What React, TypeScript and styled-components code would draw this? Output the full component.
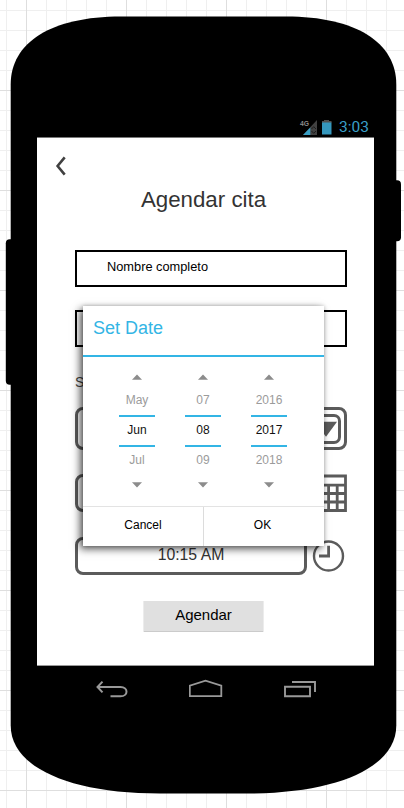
import React from "react";
import styled, { createGlobalStyle } from "styled-components";

const GlobalStyle = createGlobalStyle`
  * { box-sizing: border-box; }
  body {
    margin: 0;
    font-family: "Liberation Sans", Arial, sans-serif;
    background: #fff;
    overflow: hidden;
  }
`;

const Canvas = styled.main`
  position: relative;
  width: 404px;
  height: 808px;
  overflow: hidden;
  background-color: #fff;
  background-image:
    linear-gradient(90deg, #dedede 1px, transparent 1px),
    linear-gradient(#dedede 1px, transparent 1px),
    linear-gradient(90deg, #efefef 1px, transparent 1px),
    linear-gradient(#efefef 1px, transparent 1px);
  background-size: 100px 100px, 100px 100px, 20px 20px, 20px 20px;
  background-position: 26px 0, 0 90px, 6px 0, 0 10px;
`;

const Silhouette = styled.svg`
  position: absolute;
  inset: 0;
`;

const Device = styled.div`
  position: relative;
  display: flex;
  flex-direction: column;
  width: 337px;
  margin-left: 37px;
  padding-top: 116px;
`;

const StatusBar = styled.header`
  display: flex;
  justify-content: flex-end;
  align-items: center;
  height: 22px;
  padding-right: 5px;
  border-bottom: 1px solid #777;
  color: #3a9fc8;
  line-height: 21px;
`;

const Clock = styled.span`
  padding-top: 1px;
  font-family: Roboto, sans-serif;
  font-size: 15.5px;
`;

const StatusIcons = styled.svg`
  margin-right: 6px;
`;

const Screen = styled.section`
  position: relative;
  display: flex;
  flex-direction: column;
  height: 527px;
  padding: 0 27px 0 38px;
  background: #fff;
`;

const BackButton = styled.button`
  display: flex;
  margin: 17px 0 0 -21px;
  padding: 0;
  width: 14px;
  height: 22px;
  border: 0;
  background: none;
`;

const Title = styled.h1`
  margin: 8px 0 0 -5px;
  height: 29px;
  font-size: 22.3px;
  line-height: 29px;
  font-weight: 400;
  text-align: center;
  color: #333;
  width: 267px;
`;

const Field = styled.div<{ $top: number }>`
  height: 37px;
  margin-top: ${(p) => p.$top}px;
  padding-left: 30px;
  border: 2px solid #000;
  font-size: 12.8px;
  line-height: 30px;
  color: #000;
`;

const Label = styled.div`
  margin-top: 27px;
  height: 16px;
  font-size: 14px;
  line-height: 16px;
  color: #444;
`;

const Row = styled.div<{ $top: number; $height: number }>`
  display: flex;
  align-items: stretch;
  height: ${(p) => p.$height}px;
  margin-top: ${(p) => p.$top}px;
`;

const RoundedInput = styled.div<{ $full?: boolean }>`
  display: flex;
  align-items: center;
  justify-content: ${(p) => (p.$full ? "flex-end" : "center")};
  width: ${(p) => (p.$full ? 272 : 232)}px;
  padding: ${(p) => (p.$full ? "0 3px 0 0" : "0 0 3px")};
  border: 3px solid #5b5b5b;
  border-radius: 8px;
  color: #333;
  font-size: 15.8px;
  line-height: 18px;
`;

const DropButton = styled.div`
  display: flex;
  align-items: center;
  justify-content: center;
  width: 30px;
  height: 30px;
  border: 3px solid #5b5b5b;
  border-radius: 7px;
`;

const RowIcon = styled.svg<{ $gap: number }>`
  flex: none;
  margin-left: ${(p) => p.$gap}px;
`;

const Submit = styled.button`
  align-self: flex-start;
  margin: 26px 0 0 68px;
  width: 121px;
  height: 31px;
  padding: 0 0 3px;
  border: solid #ececec;
  border-width: 0 1px;
  box-shadow: inset 0 -1px #cbcbcb;
  background: #e0e0e0;
  color: #000;
  font: 15px/26px "Liberation Sans", Arial, sans-serif;
`;

const Dialog = styled.div`
  position: absolute;
  left: 46px;
  top: 168px;
  display: flex;
  flex-direction: column;
  width: 241px;
  height: 240px;
  background: #fff;
  box-shadow: -3px 3px 8px rgba(0, 0, 0, 0.65), 0 0 4px rgba(0, 0, 0, 0.2);
`;

const DialogTitle = styled.h2`
  margin: 0;
  height: 51px;
  padding-left: 10px;
  border-bottom: 2px solid #33b5e5;
  color: #33b5e5;
  font-size: 18px;
  line-height: 45px;
  font-weight: 400;
`;

const Picker = styled.div`
  display: flex;
  gap: 30px;
  height: 149px;
  padding: 17px 0 0 36px;
`;

const Wheel = styled.div`
  display: flex;
  flex-direction: column;
  align-items: center;
  width: 36px;
  font-size: 12px;
`;

const Side = styled.div<{ $below?: boolean }>`
  height: 14px;
  margin: ${(p) => (p.$below ? "6px 0 15px" : "13px 0 8px")};
  line-height: 14px;
  color: #9b9b9b;
`;

const Chosen = styled.div`
  width: 36px;
  height: 32px;
  border: solid #33b5e5;
  border-width: 2px 0;
  text-align: center;
  line-height: 27px;
  color: #111;
`;

const Actions = styled.div`
  display: flex;
  height: 40px;
  border-top: 1px solid #e3e3e3;
`;

const Action = styled.button`
  width: 120px;
  padding: 0 0 3px;
  border: 0;
  background: none;
  color: #000;
  font: 12px/16px "Liberation Sans", Arial, sans-serif;
  & + & {
    padding-right: 2px;
    border-left: 1px solid #dcdcdc;
  }
`;

const NavBar = styled.nav`
  display: flex;
  align-items: center;
  gap: 60px;
  height: 46px;
  padding-left: 58px;
  border-top: 1px solid #999;
`;

const Arrow = ({ down = false }: { down?: boolean }) => (
  <svg width="10" height="6" viewBox="0 0 10 6">
    <path d={down ? "M0 .2H10L5 5.6Z" : "M0 5.8H10L5 .4Z"} fill="#8c8c8c" />
  </svg>
);

const wheels = [
  ["May", "Jun", "Jul"],
  ["07", "08", "09"],
  ["2016", "2017", "2018"],
];

export default function App() {
  return (
    <>
      <GlobalStyle />
      <Canvas>
        <Silhouette width="404" height="808" viewBox="0 0 404 808">
          <path d="M10.7 84.5C10.7 42.5 51 16.5 121 16.5H286C356 16.5 396.3 42.5 396.3 84.5V725.5C396.3 767.5 337 793.5 247 793.5H160C70 793.5 10.7 767.5 10.7 725.5Z" />
          <rect x="5.8" y="239.3" width="12" height="145.5" rx="4" />
          <rect x="389" y="180.3" width="12" height="61" rx="4" />
        </Silhouette>
        <Device>
          <StatusBar>
            <StatusIcons width="34" height="18" viewBox="0 0 34 18">
              <text x="1" y="8" fontSize="8" fontWeight="700" fill="#8b8b8b" textLength="9" lengthAdjust="spacingAndGlyphs">4G</text>
              <path d="M18 2V17H4Z" fill="#414141" />
              <path d="M11.3 9.5V17H4Z" fill="#399fc5" />
              <path d="M12.5 11L14.7 8.7L17 11M12.5 13L14.7 15.3L17 13" fill="none" stroke="#1d1d1d" strokeWidth="1" />
              <path d="M23 3H25V2H30V3H32.5V5H23Z" fill="#505050" />
              <path d="M23 4.5H32.5V16.5H23Z" fill="#3597bd" />
            </StatusIcons>
            <Clock>3:03</Clock>
          </StatusBar>
          <Screen>
            <BackButton aria-label="Back">
              <svg width="14" height="22" viewBox="0 0 14 22">
                <path d="M10.7 2.4L3.6 11L10.7 19.6" fill="none" stroke="#404040" strokeWidth="2.6" />
              </svg>
            </BackButton>
            <Title>Agendar cita</Title>
            <Field $top={36}>Nombre completo</Field>
            <Field $top={23} />
            <Label>S</Label>
            <Row $top={17} $height={43}>
              <RoundedInput $full>
                <DropButton>
                  <svg width="22" height="16" viewBox="0 0 22 16">
                    <path d="M0 .7H22L11 15.7Z" fill="#5b5b5b" />
                  </svg>
                </DropButton>
              </RoundedInput>
            </Row>
            <Row $top={24} $height={38}>
              <RoundedInput />
              <RowIcon $gap={2} width="38" height="38" viewBox="0 0 38 38">
                <path d="M2 2H36.5V36.5H2ZM2 11.2H36.5M2 19.5H36.5M2 28H36.5M10.9 11V37M19.6 11V37M28.2 11V37" fill="none" stroke="#5b5b5b" strokeWidth="2.8" />
              </RowIcon>
            </Row>
            <Row $top={25} $height={38}>
              <RoundedInput>10:15 AM</RoundedInput>
              <RowIcon $gap={4} width="34" height="38" viewBox="0 0 34 38">
                <circle cx="17.5" cy="19" r="14.5" fill="none" stroke="#5b5b5b" strokeWidth="2.4" />
                <path d="M17.6 8.8V19H8" fill="none" stroke="#5b5b5b" strokeWidth="2.8" />
              </RowIcon>
            </Row>
            <Submit>Agendar</Submit>
            <Dialog role="dialog">
              <DialogTitle>Set Date</DialogTitle>
              <Picker>
                {wheels.map(([before, current, after]) => (
                  <Wheel key={current}>
                    <Arrow />
                    <Side>{before}</Side>
                    <Chosen>{current}</Chosen>
                    <Side $below>{after}</Side>
                    <Arrow down />
                  </Wheel>
                ))}
              </Picker>
              <Actions>
                <Action>Cancel</Action>
                <Action>OK</Action>
              </Actions>
            </Dialog>
          </Screen>
          <NavBar>
            <svg width="34" height="20" viewBox="0 0 34 20">
              <path d="M7.5 2.6L2.5 8L7.5 13.4M3 8H25.5C33.5 8 33.5 17.3 25.5 17.3H15.5" fill="none" stroke="#999" strokeWidth="2" />
            </svg>
            <svg width="34" height="20" viewBox="0 0 34 20">
              <path d="M.8 17.2V6.7L16.5 1.7L32.3 6.7V17.2Z" fill="none" stroke="#999" strokeWidth="1.8" />
            </svg>
            <svg width="34" height="20" viewBox="0 0 34 20">
              <path d="M2 7.7H27V17.3H2ZM9 3H32V13" fill="none" stroke="#999" strokeWidth="1.9" />
            </svg>
          </NavBar>
        </Device>
      </Canvas>
    </>
  );
}
